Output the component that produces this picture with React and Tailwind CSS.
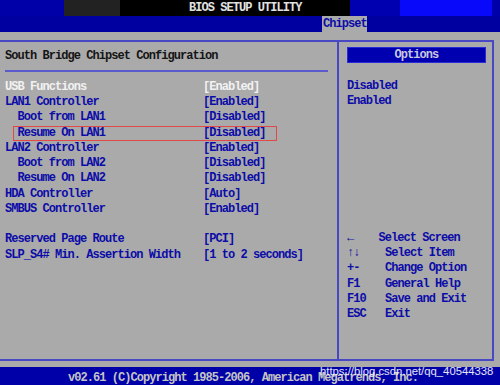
import React from "react";

const rows = [
  { l: "USB Functions", v: "[Enabled]", sel: true },
  { l: "LAN1 Controller", v: "[Enabled]" },
  { l: "Boot from LAN1", v: "[Disabled]", ind: true },
  { l: "Resume On LAN1", v: "[Disabled]", ind: true, mark: true },
  { l: "LAN2 Controller", v: "[Enabled]" },
  { l: "Boot from LAN2", v: "[Disabled]", ind: true },
  { l: "Resume On LAN2", v: "[Disabled]", ind: true },
  { l: "HDA Controller", v: "[Auto]" },
  { l: "SMBUS Controller", v: "[Enabled]" },
  null,
  { l: "Reserved Page Route", v: "[PCI]" },
  { l: "SLP_S4# Min. Assertion Width", v: "[1 to 2 seconds]" },
];

const keys = [
  ["←", "Select Screen", true],
  ["↑↓", "Select Item"],
  ["+-", "Change Option"],
  ["F1", "General Help"],
  ["F10", "Save and Exit"],
  ["ESC", "Exit"],
];

export default function App() {
  return (
    <div className="relative w-[500px] h-[385px] overflow-hidden bg-[#aaaaaa] font-['Liberation_Mono','DejaVu_Sans_Mono',monospace] font-bold text-[12px] leading-[15.25px] tracking-[-0.95px] text-[#0c0ca8] whitespace-pre">
      {/* title bar */}
      <div className="flex h-[16px]">
        <div className="w-[64px] bg-[#0000a8]" />
        <div className="w-[56px] bg-[#222222]" />
        <div className="w-[230px] bg-black pl-[69px] text-[#e2e2e2] leading-[17px]">BIOS SETUP UTILITY</div>
        <div className="w-[50px] bg-[#0000b0]" />
        <div className="w-[92px] bg-[#0808fa]" />
        <div className="flex-1 bg-[#0000a8]" />
      </div>
      {/* menu bar */}
      <div className="flex h-[16px] bg-[#0000a0]">
        <div className="w-[322px]" />
        <div className="w-[45px] bg-[#aaaaaa] pl-[1px] leading-[16px] text-[#0c0ca8]">Chipset</div>
        <div className="flex-1" />
      </div>
      <div className="h-[8px]" />
      {/* main box */}
      <div className="flex w-[494px] h-[321px] border-t-2 border-b-2 border-r-2 border-[#4848c4]">
        <div className="w-[339px] border-r-2 border-[#4848c4] pl-[5px] pt-[7px]">
          <div className="text-[#151515]">South Bridge Chipset Configuration</div>
          <div className="mt-[6px] mr-[9px] h-[2px] bg-[#5a5acc]" />
          <div className="mt-[7.5px] flex flex-col">
            {rows.map((r, i) =>
              r ? (
                <div key={i} className={`relative flex h-[15.25px] ${r.sel ? "text-[#f2f2f2]" : ""}`}>
                  <div className={`w-[198px] ${r.ind ? "pl-[12.5px]" : ""}`}>{r.l}</div>
                  <div>{r.v}</div>
                  {r.mark && (
                    <div className="absolute left-[8px] top-0 w-[264px] h-[15px] border border-[#e24848]" />
                  )}
                </div>
              ) : (
                <div key={i} className="h-[15.25px]" />
              )
            )}
          </div>
        </div>
        <div className="flex-1 flex flex-col pt-[5px] pl-[8px]">
          <div className="w-[139px] h-[16px] bg-[#0000b0] border border-[#2a2ad8] text-center leading-[14px] text-[#c8c8e0]">Options</div>
          <div className="mt-[15.5px]">Disabled</div>
          <div>Enabled</div>
          <div className="mt-[121.5px] flex flex-col">
            {keys.map(([k, d, first], i) => (
              <div key={i} className="flex h-[15.4px]">
                <div className={first ? "w-[31.5px]" : "w-[38px]"}>{k}</div>
                <div>{d}</div>
              </div>
            ))}
          </div>
        </div>
      </div>
      <div className="h-[6px]" />
      {/* footer */}
      <div className="relative h-[18px] bg-[#0000a8] overflow-hidden pl-[68px] pt-[3.5px] text-[#c4c4c4]">
        v02.61 (C)Copyright 1985-2006, American Megatrends, Inc.
      </div>
      <div className="absolute left-[320px] top-[365px] font-['Liberation_Sans',Arial,sans-serif] font-normal tracking-normal text-[11.3px] leading-[13px] text-white/90">
        https://blog.csdn.net/qq_40544338
      </div>
    </div>
  );
}
